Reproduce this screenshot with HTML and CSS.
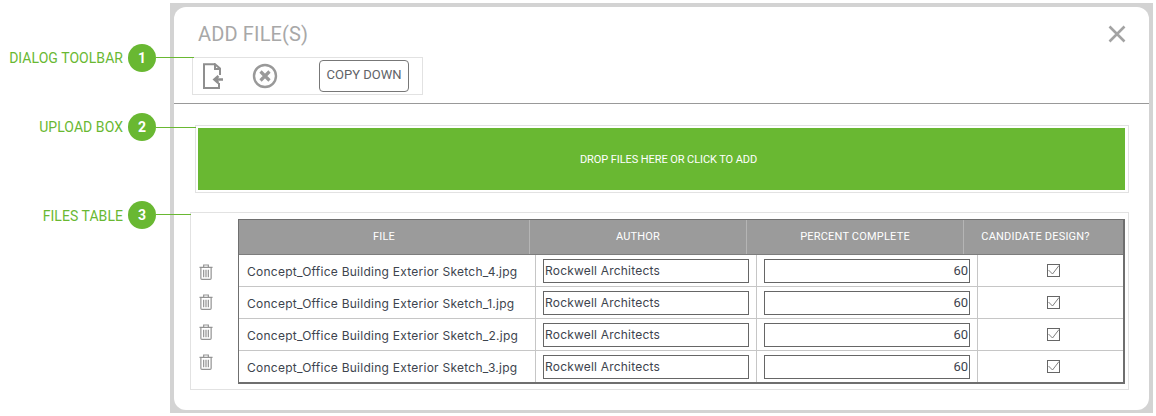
FILE: index.html
```html
<!DOCTYPE html>
<html lang="en">
<head>
<meta charset="utf-8">
<title>Add Files</title>
<link rel="stylesheet" href="styles.css">
</head>
<body>
<main class="frame">
  <section class="dialog">
    <header class="dialog-head">
      <h1 class="title">ADD FILE(S)</h1>
      <svg class="close" viewBox="0 0 18 18" width="18" height="18"><path d="M1.500 1.500 16.500 16.500M16.500 1.500 1.500 16.500" fill="none" stroke="#a3a3a3" stroke-width="2.600"/></svg>
    </header>
    <div class="toolbar">
      <svg class="tool-file" viewBox="0 0 22 26" width="22" height="26">
        <path d="M13 1.200H2V25H17V20M18 12V5.500L13 1.200V6H18" fill="none" stroke="#8f8f8f" stroke-width="2"/>
        <path d="M21 16.500H13M16.500 13 12.500 16.500 16.500 20" fill="none" stroke="#8f8f8f" stroke-width="2.600"/>
      </svg>
      <svg class="tool-cancel" viewBox="0 0 26 26" width="26" height="26">
        <circle cx="13" cy="13" r="11" fill="none" stroke="#999" stroke-width="2.400"/>
        <path d="M8.500 8.500 17.500 17.500M17.500 8.500 8.500 17.500" fill="none" stroke="#999" stroke-width="3.200"/>
      </svg>
      <button class="copy-down" type="button">COPY DOWN</button>
    </div>
    <div class="divider"></div>
    <div class="upload-box"><div class="dropzone">DROP FILES HERE OR CLICK TO ADD</div></div>
    <div class="files-box">
      <div class="trash-col">
        <svg class="trash" viewBox="0 0 15 17" width="14" height="16"><use href="#trash-icon"/></svg>
        <svg class="trash" viewBox="0 0 15 17" width="14" height="16"><use href="#trash-icon"/></svg>
        <svg class="trash" viewBox="0 0 15 17" width="14" height="16"><use href="#trash-icon"/></svg>
        <svg class="trash" viewBox="0 0 15 17" width="14" height="16"><use href="#trash-icon"/></svg>
      </div>
      <div class="table">
        <div class="thead">
          <div class="th">FILE</div>
          <div class="th">AUTHOR</div>
          <div class="th">PERCENT COMPLETE</div>
          <div class="th th-last">CANDIDATE DESIGN?</div>
        </div>
        <div class="tr">
          <div class="td td-file">Concept_Office Building Exterior Sketch_4.jpg</div>
          <div class="td"><input class="field" type="text" value="Rockwell Architects"></div>
          <div class="td"><input class="field num" type="text" value="60"></div>
          <div class="td td-check"><svg viewBox="0 0 13 13" width="13" height="13"><use href="#check-icon"/></svg></div>
        </div>
        <div class="tr">
          <div class="td td-file">Concept_Office Building Exterior Sketch_1.jpg</div>
          <div class="td"><input class="field" type="text" value="Rockwell Architects"></div>
          <div class="td"><input class="field num" type="text" value="60"></div>
          <div class="td td-check"><svg viewBox="0 0 13 13" width="13" height="13"><use href="#check-icon"/></svg></div>
        </div>
        <div class="tr">
          <div class="td td-file">Concept_Office Building Exterior Sketch_2.jpg</div>
          <div class="td"><input class="field" type="text" value="Rockwell Architects"></div>
          <div class="td"><input class="field num" type="text" value="60"></div>
          <div class="td td-check"><svg viewBox="0 0 13 13" width="13" height="13"><use href="#check-icon"/></svg></div>
        </div>
        <div class="tr">
          <div class="td td-file">Concept_Office Building Exterior Sketch_3.jpg</div>
          <div class="td"><input class="field" type="text" value="Rockwell Architects"></div>
          <div class="td"><input class="field num" type="text" value="60"></div>
          <div class="td td-check"><svg viewBox="0 0 13 13" width="13" height="13"><use href="#check-icon"/></svg></div>
        </div>
      </div>
    </div>
  </section>
</main>

<div class="callout callout-1"><span class="callout-label">DIALOG TOOLBAR</span><span class="badge">1</span><span class="leader leader-1"></span></div>
<div class="callout callout-2"><span class="callout-label">UPLOAD BOX</span><span class="badge">2</span><span class="leader leader-2"></span></div>
<div class="callout callout-3"><span class="callout-label label-low">FILES TABLE</span><span class="badge">3</span><span class="leader leader-3"></span></div>

<svg class="defs" width="0" height="0">
  <defs>
    <g id="trash-icon" fill="none" stroke="#949494" stroke-width="1.300">
      <path d="M.5 3.500H14.500M5 3.500V1H10V3.500"/>
      <path d="M2 3.500V15.200Q2 16.400 3.200 16.400H11.800Q13 16.400 13 15.200V3.500"/>
      <path d="M5 6V14M7.500 6V14M10 6V14"/>
    </g>
    <g id="check-icon" fill="none">
      <rect x=".5" y=".5" width="12" height="12" stroke="#666"/>
      <path d="M1.500 6 5.500 10 12 1.500" stroke="#808080"/>
    </g>
  </defs>
</svg>
</body>
</html>
```

FILE: styles.css
```css
* { box-sizing: border-box; }
html, body { margin: 0; padding: 0; background: #fff; }
body { width: 1156px; height: 416px; overflow: hidden; position: relative; font-family: "Roboto", "Liberation Sans", sans-serif; }

.frame { margin: 3px 0 0 170px; width: 983px; height: 410px; padding: 4px 4px 3px; background: #d3d3d3; }
.dialog { height: 403px; background: #fff; border-radius: 12px; display: flex; flex-direction: column; }

.dialog-head { display: flex; justify-content: space-between; align-items: center; height: 50px; padding: 0 23px 0 24px; flex: none; }
.title { margin: 3px 0 0; font-size: 20px; font-weight: 400; color: #a8a8a8; letter-spacing: .15px; }
.close { margin-top: 3px; }

.toolbar { display: flex; align-items: center; width: 231px; height: 38px; margin-left: 18px; border: 1px solid #e2e2e2; flex: none; }
.tool-file { margin-left: 9px; }
.tool-cancel { margin-left: 28px; }
.copy-down { width: 90px; height: 32px; margin-left: 41px; padding: 0 0 3px; background: #fff; border: 1px solid #777; border-radius: 4px; font: 400 13px "Roboto", "Liberation Sans", sans-serif; color: #5f6368; }

.divider { height: 1px; margin-top: 8px; background: #999; flex: none; }

.upload-box { width: 934px; height: 68px; margin: 21px 0 0 21px; padding: 2px 3px 2px 2px; border: 1px solid #e2e2e2; flex: none; }
.dropzone { height: 62px; padding-left: 14px; display: flex; align-items: center; justify-content: center; background: #69b832; color: #fff; font-size: 11px; font-weight: 400; letter-spacing: -.08px; }

.files-box { display: flex; width: 939px; height: 178px; margin: 19px 0 0 16px; padding: 6px 3px 5px 0; border: 1px solid #e2e2e2; flex: none; }
.trash-col { width: 47px; padding: 45px 0 0 8px; display: flex; flex-direction: column; gap: 14px; flex: none; }
.trash { display: block; }

.table { width: 888px; height: 165px; border: 1px solid #6f6f6f; border-width: 1px 2px 2px 1px; font-size: 12px; }
.thead { display: grid; grid-template-columns: 290px 217px 217px 1fr; height: 35px; background: #9b9b9b; border-bottom: 1px solid #7d7d7d; }
.th { display: flex; align-items: center; justify-content: center; padding-bottom: 2px; color: #fff; font-size: 11px; font-weight: 400; letter-spacing: .2px; border-left: 1px solid #b5b5b5; }
.th:first-child { border-left: 0; }
.th-last { padding-right: 16px; }

.tr { display: grid; grid-template-columns: 296px 221px 221px 1fr; height: 32px; border-top: 1px solid #c6c6c6; }
.thead + .tr { border-top: 0; height: 31px; }
.td { display: flex; align-items: center; padding: 0 7px; border-left: 1px solid #c6c6c6; min-width: 0; }
.td:first-child { border-left: 0; }
.td-file { padding: 1px 0 0 8px; font-family: "Inter", "Noto Sans", sans-serif; font-size: 12px; letter-spacing: .25px; color: #3d444e; white-space: nowrap; }
.td-check { justify-content: center; padding: 0 0 1px 5px; }
.field { width: 100%; height: 24px; padding: 0 1px; border: 1px solid #666; background: #fff; color: #3d444e; font: 400 12px "Inter", "Noto Sans", sans-serif; letter-spacing: .2px; outline: 0; border-radius: 0; }
.num { text-align: right; font-family: "Roboto", "Liberation Sans", sans-serif; font-size: 13px; letter-spacing: 0; }

.callout { position: absolute; right: 1000px; display: flex; align-items: center; height: 28px; color: #69b832; font-size: 14px; font-weight: 400; letter-spacing: .05px; white-space: nowrap; }
.callout-1 { top: 44px; }
.callout-2 { top: 113px; }
.callout-3 { top: 201px; }
.callout-label { margin: 0 5px 0 0; }
.label-low { margin-top: 1px; }
.badge { display: flex; align-items: center; justify-content: center; width: 28px; height: 28px; border-radius: 50%; background: #69b832; color: #fff; font-size: 14px; font-weight: 700; }
.leader { position: absolute; left: 100%; height: 1px; background: #69b832; }
.leader-1 { top: 13px; width: 38px; }
.leader-2 { top: 14px; width: 40px; }
.leader-3 { top: 13px; width: 35px; }
.defs { position: absolute; }
```
